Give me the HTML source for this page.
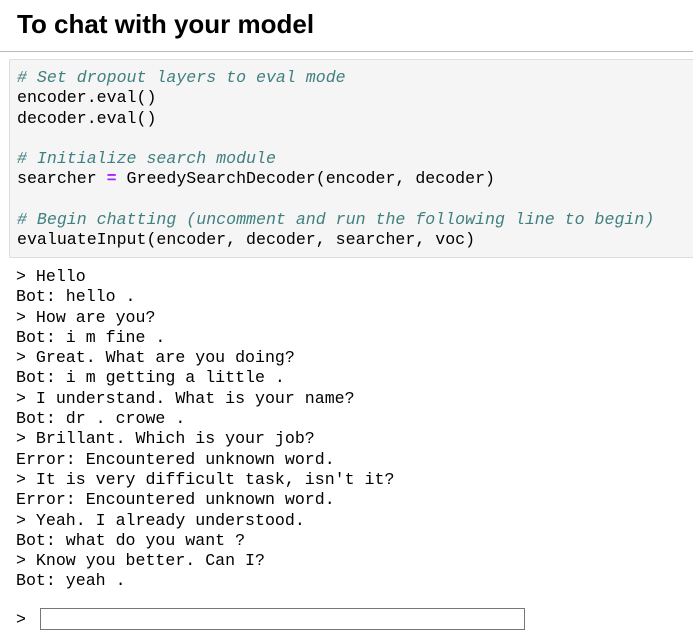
<!DOCTYPE html>
<html><head><style>
body{margin:0;width:693px;height:636px;background:#fff;overflow:hidden;position:relative;font-family:"Liberation Mono",monospace;}
h1{position:absolute;left:17px;top:9px;margin:0;font:bold 26px "Liberation Sans",sans-serif;color:#000;}
.hr{position:absolute;left:0;top:51px;width:693px;height:1px;background:#bbb;}
.code{position:absolute;left:9px;top:59px;width:700px;height:197px;background:#f5f5f5;border:1px solid #ddd;border-radius:2px;}
pre{margin:0;font-family:"Liberation Mono",monospace;font-size:16.6px;line-height:20.3px;color:#000;}
.code pre{position:absolute;left:7px;top:8px;}
.c{color:#408080;font-style:italic;}
.o{color:#aa22ff;font-weight:bold;}
.out{position:absolute;left:16px;top:267px;}
.gt{position:absolute;left:16px;top:610px;font-size:16.6px;}
.inp{position:absolute;left:40px;top:608px;border:1px solid #767676;box-sizing:border-box;width:485px;height:22px;}
</style></head><body>
<h1>To chat with your model</h1>
<div class="hr"></div>
<div class="code"><pre><span class="c"># Set dropout layers to eval mode</span>
encoder.eval()
decoder.eval()

<span class="c"># Initialize search module</span>
searcher <span class="o">=</span> GreedySearchDecoder(encoder, decoder)

<span class="c"># Begin chatting (uncomment and run the following line to begin)</span>
evaluateInput(encoder, decoder, searcher, voc)</pre></div>
<pre class="out">&gt; Hello
Bot: hello .
&gt; How are you?
Bot: i m fine .
&gt; Great. What are you doing?
Bot: i m getting a little .
&gt; I understand. What is your name?
Bot: dr . crowe .
&gt; Brillant. Which is your job?
Error: Encountered unknown word.
&gt; It is very difficult task, isn't it?
Error: Encountered unknown word.
&gt; Yeah. I already understood.
Bot: what do you want ?
&gt; Know you better. Can I?
Bot: yeah .</pre>
<pre class="gt">&gt;</pre>
<div class="inp"></div>
</body></html>
